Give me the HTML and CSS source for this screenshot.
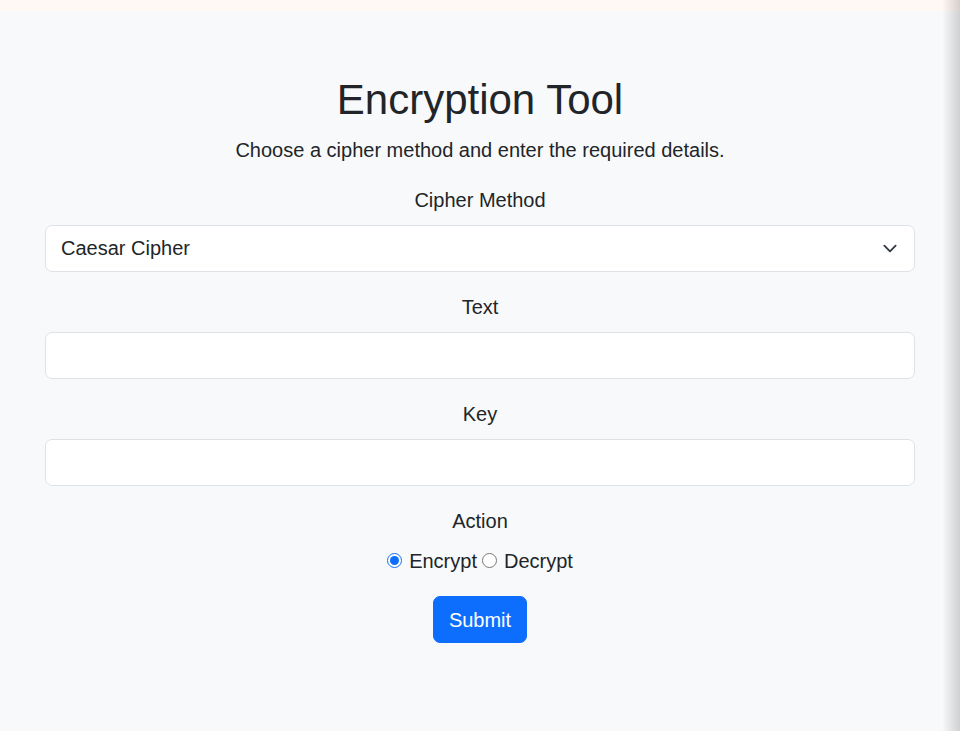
FILE: index.html
```html
<!DOCTYPE html>
<html lang="en">
<head>
<meta charset="utf-8">
<title>Encryption Tool</title>
<link rel="stylesheet" href="styles.css">
</head>
<body>
<div class="topband"></div>
<main class="container">
  <h1 class="title">Encryption Tool</h1>
  <p class="lead">Choose a cipher method and enter the required details.</p>
  <form class="form">
    <div class="field">
      <label class="label" for="method">Cipher Method</label>
      <div class="select-wrap">
        <select id="method" class="control select">
          <option>Caesar Cipher</option>
          <option>Vigenère Cipher</option>
        </select>
        <svg class="chevron" viewBox="0 0 16 16" width="20" height="15" aria-hidden="true"><path d="m2 5 6 6 6-6" fill="none" stroke="#343a40" stroke-width="2" stroke-linecap="round" stroke-linejoin="round"/></svg>
      </div>
    </div>
    <div class="field">
      <label class="label" for="text">Text</label>
      <input id="text" class="control" type="text">
    </div>
    <div class="field">
      <label class="label" for="key">Key</label>
      <input id="key" class="control" type="text">
    </div>
    <div class="field">
      <label class="label">Action</label>
      <div class="radios">
        <input class="radio" type="radio" id="enc" name="action" checked><label for="enc">Encrypt</label><input class="radio" type="radio" id="dec" name="action"><label for="dec">Decrypt</label>
      </div>
    </div>
    <button type="button" class="btn">Submit</button>
  </form>
</main>
<div class="edge-shadow"></div>
</body>
</html>
```
FILE: styles.css
```css
html, body {
  margin: 0;
  padding: 0;
}
body {
  background: #f8f9fa;
  color: #212529;
  font-family: "Liberation Sans", Arial, sans-serif;
  font-size: 20px;
  line-height: 30px;
  min-height: 731px;
}
.topband {
  height: 11px;
  background: #fff8f5;
}
.container {
  width: 870px;
  margin: 0 auto;
  padding-top: 64px;
  text-align: center;
}
.title {
  margin: 0 0 10px;
  font-size: 42px;
  line-height: 50px;
  font-weight: 400;
}
.lead {
  margin: 0 0 20px;
}
.form {
  display: flex;
  flex-direction: column;
  align-items: center;
}
.field {
  width: 100%;
  margin-bottom: 20px;
  display: flex;
  flex-direction: column;
  align-items: center;
}
.label {
  display: block;
  margin-bottom: 10px;
}
.select-wrap {
  position: relative;
  width: 100%;
}
.control {
  box-sizing: border-box;
  display: block;
  width: 100%;
  height: 47px;
  padding: 6px 15px 8px;
  font-family: inherit;
  font-size: 20px;
  line-height: 30px;
  color: #212529;
  background: #fff;
  border: 1px solid #dee2e6;
  border-radius: 7px;
  outline: none;
  text-align: left;
}
.select {
  appearance: none;
  -webkit-appearance: none;
  padding-right: 50px;
}
.chevron {
  position: absolute;
  right: 15px;
  top: 16px;
  pointer-events: none;
}
.radios {
  display: flex;
  align-items: center;
  height: 30px;
}
.radio {
  width: 15px;
  height: 15px;
  margin: 0 7px 2px 0;
  accent-color: #0d6efd;
}
.radios label + .radio {
  margin-left: 5px;
}
.btn {
  box-sizing: border-box;
  height: 47px;
  padding: 7px 15px;
  font-family: inherit;
  font-size: 20px;
  line-height: 30px;
  color: #fff;
  background: #0d6efd;
  border: 1px solid #0d6efd;
  border-radius: 7px;
}
.edge-shadow {
  position: fixed;
  top: 0;
  right: 0;
  width: 18px;
  height: 100%;
  background: linear-gradient(to right, rgba(0,0,0,0), rgba(0,0,0,0.16));
  pointer-events: none;
}
```
